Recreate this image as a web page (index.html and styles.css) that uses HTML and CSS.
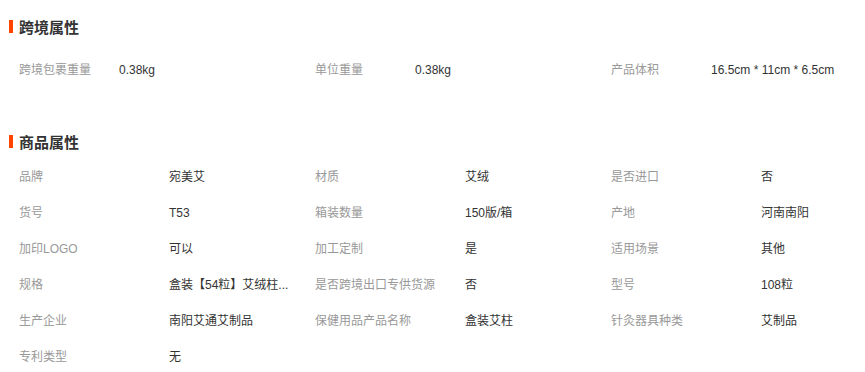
FILE: index.html
```html
<!DOCTYPE html>
<html lang="zh-CN">
<head>
<meta charset="utf-8">
<title>属性</title>
<link rel="stylesheet" href="styles.css">
</head>
<body>
<div class="section cross">
  <div class="title">跨境属性</div>
  <div class="grid grid-cross">
    <div class="label">跨境包裹重量</div><div class="value">0.38kg</div>
    <div class="label">单位重量</div><div class="value">0.38kg</div>
    <div class="label">产品体积</div><div class="value">16.5cm * 11cm * 6.5cm</div>
  </div>
</div>
<div class="section goods">
  <div class="title">商品属性</div>
  <div class="grid grid-goods">
    <div class="label">品牌</div><div class="value">宛美艾</div>
    <div class="label">材质</div><div class="value">艾绒</div>
    <div class="label">是否进口</div><div class="value">否</div>

    <div class="label">货号</div><div class="value">T53</div>
    <div class="label">箱装数量</div><div class="value">150版/箱</div>
    <div class="label">产地</div><div class="value">河南南阳</div>

    <div class="label">加印LOGO</div><div class="value">可以</div>
    <div class="label">加工定制</div><div class="value">是</div>
    <div class="label">适用场景</div><div class="value">其他</div>

    <div class="label">规格</div><div class="value">盒装【54粒】艾绒柱...</div>
    <div class="label">是否跨境出口专供货源</div><div class="value">否</div>
    <div class="label">型号</div><div class="value">108粒</div>

    <div class="label">生产企业</div><div class="value">南阳艾通艾制品</div>
    <div class="label">保健用品产品名称</div><div class="value">盒装艾柱</div>
    <div class="label">针灸器具种类</div><div class="value">艾制品</div>

    <div class="label">专利类型</div><div class="value">无</div>
  </div>
</div>
</body>
</html>
```
FILE: styles.css
```css
html, body {
  margin: 0;
  padding: 0;
  background: #fff;
}
body {
  font-family: "Liberation Sans", "Noto Sans CJK SC", sans-serif;
  font-size: 12px;
  color: #333;
}
.section {
  padding-left: 9px;
}
.title {
  display: flex;
  align-items: center;
  height: 20px;
  font-size: 15px;
  font-weight: bold;
  color: #333;
}
.title::before {
  content: "";
  display: block;
  width: 4px;
  height: 13px;
  background: #ff4400;
  margin-right: 6px;
}
.cross .title {
  margin-top: 16px;
}
.goods .title {
  margin-top: 51px;
}
.grid {
  display: grid;
  padding-left: 10px;
}
.grid-cross {
  grid-template-columns: 100px 196px 100px 196px 100px auto;
  margin-top: 24px;
  line-height: 20px;
}
.grid-goods {
  grid-template-columns: 150px 146px 150px 146px 150px auto;
  grid-auto-rows: 36px;
  line-height: 36px;
  margin-top: 8px;
}
.label {
  color: #999;
  white-space: nowrap;
}
.value {
  color: #333;
  white-space: nowrap;
}
```
